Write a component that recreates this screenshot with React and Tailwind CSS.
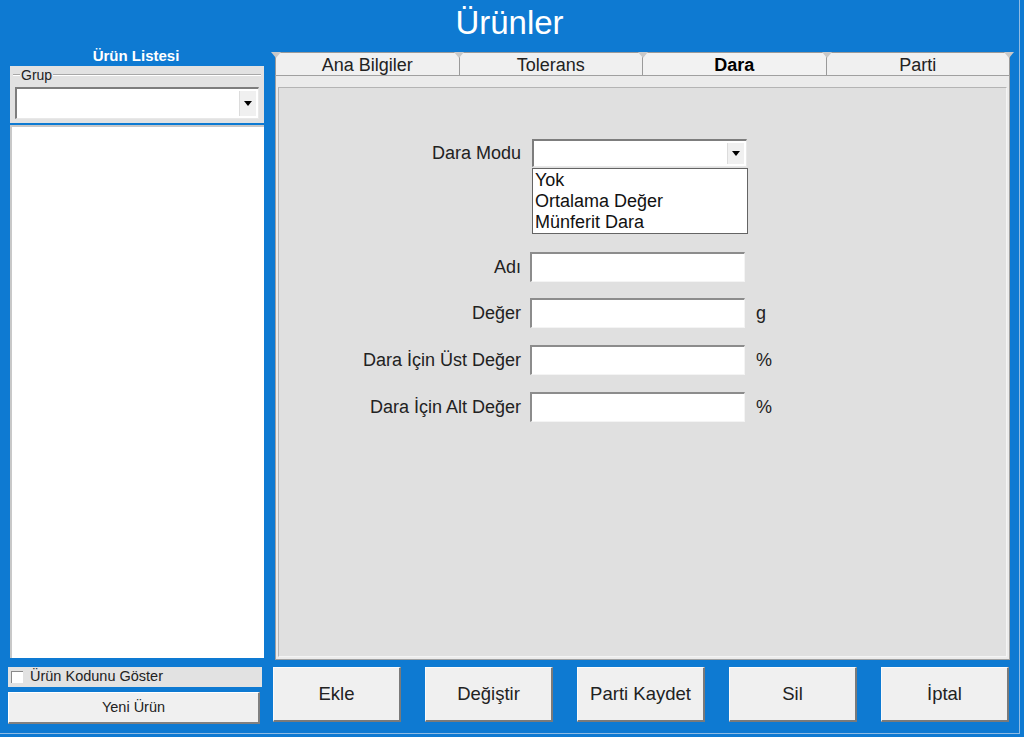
import React from "react";

const font = { fontFamily: '"Liberation Sans", Arial, sans-serif' };

const Arrow = () => (
  <div className="w-[17px] h-full flex items-center justify-center bg-[#f0f0f0] border-l border-[#dcdcdc]">
    <svg width="8" height="5" viewBox="0 0 8 5">
      <path d="M0 0 L8 0 L4 5 Z" fill="#000" />
    </svg>
  </div>
);

const Notch = ({ className }) => (
  <svg className={className} width="10" height="6" viewBox="0 0 10 6">
    <path d="M0 0 L10 0 L5 6 Z" fill="#c8c8c8" />
  </svg>
);

const Tab = ({ label, active, first }) => (
  <div
    className={`relative flex-1 h-full flex items-center justify-center border-t border-r border-[#9a9a9a] ${
      first ? "border-l" : ""
    } ${active ? "bg-[#f2f2f2] font-bold text-black" : "bg-[#f0f0f0] text-[#222]"} text-[18px] leading-none`}
  >
    <span className="pt-[2px]">{label}</span>
  </div>
);

const Field = ({ label, unit }) => (
  <div className="flex items-center h-[30px]">
    <div className="w-[242px] text-right text-[18px] text-[#222] pr-0">{label}</div>
    <div className="ml-[9px] w-[215px] h-[30px] bg-white border-t-2 border-l-2 border-[#8c8c8c] border-b border-r border-b-[#f4f4f4] border-r-[#f4f4f4]" />
    {unit && <div className="ml-[11px] text-[18px] text-[#222]">{unit}</div>}
  </div>
);

const BigButton = ({ label }) => (
  <div className="w-[128px] h-[55px] flex items-center justify-center bg-[#f0f0f0] border-t border-l border-[#fafafa] border-b-2 border-r-2 border-b-[#7a7a7a] border-r-[#7a7a7a] text-[18.5px] text-[#222]">
    {label}
  </div>
);

export default function App() {
  return (
    <div style={font} className="w-[1024px] h-[737px] bg-[#0e7ad2] overflow-hidden">
      <div className="w-[1020px] h-[734px] border-r border-b border-[#8fbbe3] flex flex-col">
        <div className="h-[44px] flex items-center justify-center text-white text-[33px] leading-none pt-[1px]">
          Ürünler
        </div>
        <div className="flex flex-1">
          {/* left column */}
          <div className="ml-[8px] w-[256px] flex flex-col">
            <div className="h-[22px] flex items-center justify-center pt-[2px] text-white font-bold text-[15px]">
              Ürün Listesi
            </div>
            <div className="ml-[2px] w-[254px] h-[57px] bg-[#e2e2e2] relative">
              <div className="absolute left-[3px] right-[3px] top-[8px] h-[2px] border-t border-[#a8a8a8] border-b border-b-white" />
              <div className="absolute left-[10px] top-[1px] px-[1px] bg-[#e2e2e2] text-[14px] leading-[16px] text-[#222]">Grup</div>
              <div className="absolute left-[5px] top-[21px] w-[244px] h-[32px] bg-white border-t-2 border-l-2 border-[#7d7d7d] border-b border-r border-b-[#e8e8e8] border-r-[#e8e8e8] flex justify-end p-[2px]">
                <Arrow />
              </div>
            </div>
            <div className="ml-[2px] mt-[2px] w-[254px] h-[533px] bg-white border-t-2 border-l-2 border-[#c8c8c8]" />
            <div className="mt-[9px] w-[254px] h-[20px] bg-[#e2e2e2] flex items-center">
              <div className="ml-[3px] w-[12px] h-[12px] bg-white border-t border-l border-[#8a8a8a]" />
              <span className="ml-[7px] text-[14.5px] text-[#222]">Ürün Kodunu Göster</span>
            </div>
            <div className="mt-[5px] w-[252px] h-[32px] flex items-center justify-center bg-[#f0f0f0] border-t border-l border-white border-b-2 border-r-2 border-b-[#808080] border-r-[#808080] text-[14.5px] text-[#222]">
              Yeni Ürün
            </div>
          </div>

          {/* right column */}
          <div className="ml-[9px] w-[737px] flex flex-col">
            <div className="mt-[8px] ml-[2px] w-[735px] h-[23px] flex relative">
              <Tab label="Ana Bilgiler" first />
              <Tab label="Tolerans" />
              <Tab label="Dara" active />
              <Tab label="Parti" />
              <Notch className="absolute left-[-4px] top-0" />
              <Notch className="absolute left-[179px] top-0" />
              <Notch className="absolute left-[363px] top-0" />
              <Notch className="absolute left-[547px] top-0" />
              <Notch className="absolute right-[-4px] top-0" />
            </div>
            <div className="ml-[2px] w-[735px] h-[585px] bg-[#ebebeb] border-t border-l border-r border-b border-[#a0a0a0] pt-[11px] px-[2px] pb-[2px]">
              <div className="w-full h-full bg-[#e0e0e0] border-t border-l border-[#b4b4b4] border-r border-b border-r-[#f4f4f4] border-b-[#f4f4f4] flex flex-col">
                <div className="mt-[51px] flex items-center h-[28px]">
                  <div className="w-[242px] text-right text-[18px] text-[#222]">Dara Modu</div>
                  <div className="ml-[11px] relative w-[215px] h-[28px] bg-white border-t-2 border-l-2 border-[#7d7d7d] border-b border-r border-b-[#e8e8e8] border-r-[#e8e8e8] flex justify-end p-[2px]">
                    <Arrow />
                    <div className="absolute left-[-2px] top-[27px] w-[216px] h-[66px] bg-white border border-[#646464] pl-[2px] pt-[1px] text-[18px] leading-[21px] text-[#111]">
                      <div>Yok</div>
                      <div>Ortalama Değer</div>
                      <div>Münferit Dara</div>
                    </div>
                  </div>
                </div>
                <div className="mt-[85px] flex flex-col gap-[16px]">
                  <Field label="Adı" />
                  <Field label="Değer" unit="g" />
                  <div className="mt-[1px]">
                    <Field label="Dara İçin Üst Değer" unit="%" />
                  </div>
                  <div className="mt-[1px]">
                    <Field label="Dara İçin Alt Değer" unit="%" />
                  </div>
                </div>
              </div>
            </div>
            <div className="mt-[7px] flex gap-[24px]">
              <BigButton label="Ekle" />
              <BigButton label="Değiştir" />
              <BigButton label="Parti Kaydet" />
              <BigButton label="Sil" />
              <BigButton label="İptal" />
            </div>
          </div>
        </div>
      </div>
    </div>
  );
}
